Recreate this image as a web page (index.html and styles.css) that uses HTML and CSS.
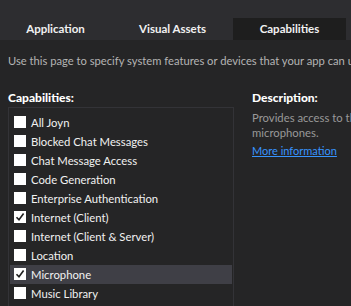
FILE: index.html
```html
<!DOCTYPE html>
<html lang="en">

<head>
    <meta charset="UTF-8">
    <meta name="viewport" content="width=device-width, initial-scale=1.0">
    <title>Package Manifest - Capabilities</title>
    <link rel="stylesheet" href="styles.css">
</head>

<body>

    <!-- Tab strip -->
    <div class="tabs">
        <div class="tab">Application</div>
        <div class="tab">Visual Assets</div>
        <div class="tab active">Capabilities</div>
    </div>

    <div class="content">
        <p class="intro">Use this page to specify system features or devices that your app can use</p>

        <div class="columns">
            <!-- Capability list -->
            <div class="caps">
                <h2 class="label">Capabilities:</h2>
                <ul class="cap-list">
                    <li class="cap"><span class="box"></span>All Joyn</li>
                    <li class="cap"><span class="box"></span>Blocked Chat Messages</li>
                    <li class="cap"><span class="box"></span>Chat Message Access</li>
                    <li class="cap"><span class="box"></span>Code Generation</li>
                    <li class="cap"><span class="box"></span>Enterprise Authentication</li>
                    <li class="cap"><span class="box checked"><svg viewBox="0 0 12 12"><path d="M2.5 6.2 L5 8.8 L9.6 2.6" /></svg></span>Internet (Client)</li>
                    <li class="cap"><span class="box"></span>Internet (Client &amp; Server)</li>
                    <li class="cap"><span class="box"></span>Location</li>
                    <li class="cap selected"><span class="box checked"><svg viewBox="0 0 12 12"><path d="M2.5 6.2 L5 8.8 L9.6 2.6" /></svg></span>Microphone</li>
                    <li class="cap"><span class="box"></span>Music Library</li>
                </ul>
            </div>

            <!-- Description panel -->
            <div class="desc">
                <h2 class="label">Description:</h2>
                <p class="desc-text">Provides access to the microphone's audio feed<br>microphones.</p>
                <a href="#" class="more">More information</a>
            </div>
        </div>
    </div>

</body>

</html>
```

FILE: styles.css
```css
/* General Reset */
* {
    margin: 0;
    padding: 0;
    box-sizing: border-box;
}

body {
    background-color: #252526;
    color: #f1f1f1;
    font-family: "Segoe UI", Lato, "Noto Sans", sans-serif;
    font-size: 11px;
    width: 351px;
    height: 306px;
    overflow: hidden;
}

/* Tab strip */
.tabs {
    background-color: #2d2d30;
    height: 40px;
    padding-top: 18px;
    display: flex;
    gap: 4px;
    margin-left: -1px;
}

.tab {
    width: 113px;
    height: 22px;
    line-height: 22px;
    text-align: center;
    font-size: 11.5px;
    font-weight: bold;
    color: #f1f1f1;
}

.tab.active {
    background-color: #1e1e1e;
}

/* Page content */
.content {
    padding: 13px 0 0 8px;
    white-space: nowrap;
}

.intro {
    line-height: 16px;
    font-size: 11.2px;
    color: #b4b4b4;
    overflow: hidden;
}

.columns {
    display: flex;
    gap: 18px;
    margin-top: 21px;
}

.label {
    font-size: 12px;
    font-weight: 900;
    line-height: 16px;
    color: #ffffff;
}

/* Capability list */
.caps {
    width: 226px;
    flex-shrink: 0;
}

.cap-list {
    list-style: none;
    margin-top: 1px;
    border: 1px solid #333337;
    border-bottom: none;
    padding: 4.5px 1px 0;
    height: 200px;
    overflow: hidden;
}

.cap {
    height: 19px;
    display: flex;
    align-items: center;
    padding-left: 4px;
    font-size: 11.3px;
}

.cap.selected {
    background-color: #3f3f46;
}

.box {
    width: 12px;
    height: 12px;
    background-color: #ffffff;
    margin-right: 5px;
    flex-shrink: 0;
    display: flex;
}

.box svg {
    width: 12px;
    height: 12px;
    fill: none;
    stroke: #1e1e1e;
    stroke-width: 1.6;
}

/* Description panel */
.desc {
    width: 99px;
    flex-shrink: 0;
    overflow: hidden;
}

.desc-text {
    margin-top: 4px;
    line-height: 15px;
    font-size: 11.3px;
    color: #999999;
}

.more {
    display: inline-block;
    margin-top: 3px;
    line-height: 16px;
    color: #3794ff;
    text-decoration: underline;
}
```
